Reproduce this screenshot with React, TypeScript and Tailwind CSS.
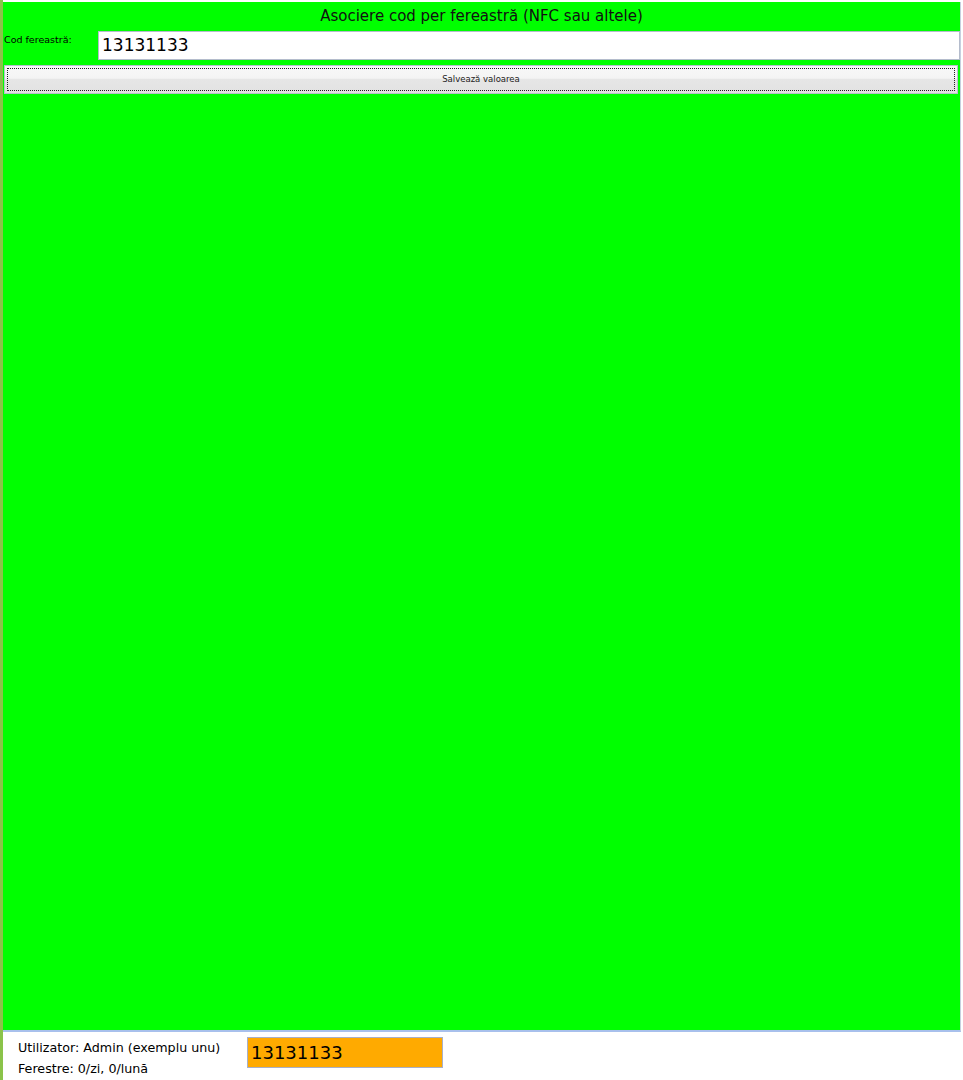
import React from "react";

export default function App() {
  return (
    <div
      className="w-[963px] h-[1080px] bg-white flex flex-col border-l-[3px] border-[#8bc34a] overflow-hidden"
      style={{ fontFamily: '"DejaVu Sans", Verdana, sans-serif' }}
    >
      <div className="flex-1 flex flex-col bg-[#00ff00] mt-[2px] mr-[2px] border-r border-[#c8d0e0] border-b-2 border-b-[#a8c0ec]">
        <div className="h-[29px] flex items-center justify-center text-[15px] text-[#111]">
          Asociere cod per fereastră (NFC sau altele)
        </div>
        <div className="flex items-start h-[29px]">
          <div className="w-[95px] pl-[1px] pt-[3px] text-[9.5px] text-black leading-[12px]">
            Cod fereastră:
          </div>
          <div className="flex-1 h-[29px] bg-white border border-[#b4bccc] flex items-center pl-[3px] text-[17px] text-black">
            13131133
          </div>
        </div>
        <div className="h-[5px]" />
        <div className="ml-[1px] mr-[2px] h-[29px] border border-[#b8bfcc] bg-[linear-gradient(to_bottom,#f8f8f8_0%,#f4f4f4_45%,#e6e6e6_50%,#e2e2e2_100%)] p-[2px]">
          <div className="h-full border border-dotted border-[#222] flex items-center justify-center text-[8.5px] text-[#222]">
            Salvează valoarea
          </div>
        </div>
      </div>
      <div className="h-[48px] flex items-start">
        <div className="pl-[15px] pt-[5px] w-[244px] text-[12.7px] leading-[21px] text-black">
          <div>Utilizator: Admin (exemplu unu)</div>
          <div>Ferestre: 0/zi, 0/lună</div>
        </div>
        <div className="mt-[5px] w-[196px] h-[31px] bg-[#ffaa00] border border-[#a8b0c8] flex items-center pl-[3px] text-[18px] text-black">
          13131133
        </div>
      </div>
    </div>
  );
}
